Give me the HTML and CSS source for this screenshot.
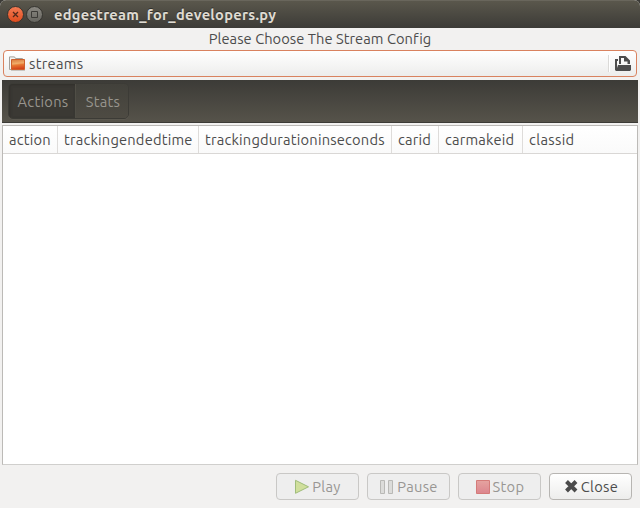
FILE: index.html
```html
<!DOCTYPE html>
<html lang="en">
<head>
<meta charset="utf-8">
<title>edgestream_for_developers.py</title>
<link rel="stylesheet" href="styles.css">
</head>
<body>
<div class="window">
  <header class="titlebar">
    <svg class="controls" width="40" height="18" viewBox="0 0 40 18">
      <defs>
        <linearGradient id="close" x2="0" y2="1"><stop stop-color="#f47c55"/><stop offset="1" stop-color="#df4b1c"/></linearGradient>
        <linearGradient id="max" x2="0" y2="1"><stop stop-color="#8b8982"/><stop offset="1" stop-color="#65645e"/></linearGradient>
      </defs>
      <circle cx="9.5" cy="8.5" r="8" fill="url(#close)" stroke="#35342f"/>
      <path d="M7 6l5 5M12 6l-5 5" stroke="#53291b" stroke-width="1.3"/>
      <circle cx="28.5" cy="8.5" r="8" fill="url(#max)" stroke="#35342f"/>
      <path d="M25.5 5.5h6v6h-6z" fill="none" stroke="#3c3b37"/>
    </svg>
    <h1 class="title">edgestream_for_developers.py</h1>
  </header>
  <div class="prompt"><span>Please Choose The Stream Config</span></div>
  <div class="chooser">
    <svg width="16" height="16" viewBox="0 0 16 16">
      <defs><linearGradient id="folder" x2=".15" y2="1"><stop stop-color="#d9773a"/><stop offset=".45" stop-color="#f0ad6a"/><stop offset=".6" stop-color="#e87832"/><stop offset="1" stop-color="#d3431a"/></linearGradient></defs>
      <path d="M.5 13.5V.9h5l1 1.6h7V5" fill="#f4f3f1" stroke="#a2a09b"/>
      <path d="M.5 13.5h2" stroke="#a2a09b"/>
      <path d="M2.500 3.500h13v10h-13z" fill="url(#folder)" stroke="#cd602c"/>
      <path d="M2 14.5h14" stroke="#c9c6c1"/>
    </svg>
    <span class="folder-name">streams</span>
    <span class="divider"></span>
    <svg class="open-icon" width="16" height="16" viewBox="0 0 16 16">
      <path d="M0 3h3v2H2v7H0z" fill="#4c4c4c"/>
      <path d="M4 8V0h6.5L15 4.500V8h-2.500V5.500H9V2H6v6z" fill="#4c4c4c"/>
      <path d="M3 9h13v5l-1 1H1l-1-1v-2h2z" fill="#4c4c4c"/>
    </svg>
  </div>
  <nav class="toolbar">
    <div class="switcher"><button class="tab selected">Actions</button><button class="tab">Stats</button></div>
  </nav>
  <main class="list">
    <div class="columns">
      <div>action</div><div>trackingendedtime</div><div>trackingdurationinseconds</div><div>carid</div><div>carmakeid</div><div class="classid">classid</div>
    </div>
  </main>
  <footer class="actions">
    <button class="button" disabled>
      <svg width="16" height="16" viewBox="0 0 16 16"><path d="M1.5 1.3v13L14.5 7.8z" fill="#d0df9c" stroke="#a0bd7b"/></svg><span>Play</span>
    </button>
    <button class="button" disabled>
      <svg width="16" height="16" viewBox="0 0 16 16"><path d="M1.5 1.5h4v13h-4zM9.5 1.5h4v13h-4z" fill="#dcdcda" stroke="#b9b9b6"/></svg><span>Pause</span>
    </button>
    <button class="button" disabled>
      <svg width="16" height="16" viewBox="0 0 16 16"><defs><linearGradient id="stop" x2="0" y2="1"><stop stop-color="#e5a3a0"/><stop offset="1" stop-color="#dc858d"/></linearGradient></defs><path d="M1.5 1.5h13v13h-13z" fill="url(#stop)" stroke="#d47b79"/></svg><span>Stop</span>
    </button>
    <button class="button close">
      <svg width="16" height="16" viewBox="0 0 16 16"><path d="M3.5 2.5l9.500 9.500M13 2.500l-9.500 9.500" stroke="#4b4b4b" stroke-width="4"/></svg><span>Close</span>
    </button>
  </footer>
</div>
</body>
</html>
```
FILE: styles.css
```css
* { box-sizing: border-box; }
body {
  margin: 0;
  background: #3c3b37;
  color: #4c4c4c;
  font: 14.667px/20px Ubuntu, "Noto Sans", sans-serif;
}
button { font: inherit; color: inherit; letter-spacing: inherit; padding: 0; margin: 0; }
svg { display: block; flex: none; }
.window {
  display: flex;
  flex-direction: column;
  height: 508px;
  background: #f2f1f0;
  border-radius: 6px 6px 0 0;
  overflow: hidden;
}
.titlebar {
  display: flex;
  align-items: center;
  gap: 8px;
  flex: 0 0 28px;
  padding: 1px 6px 0;
  background: linear-gradient(#5a574c, #3c3b37);
  border-top: 1px solid #69665c;
}
.title {
  margin: 0;
  color: #dfdbd2;
  font-size: 14.667px;
  font-weight: 700;
  line-height: 20px;
  letter-spacing: .27px;
  white-space: nowrap;
  text-shadow: 0 -1px #302f2b;
}
.prompt { flex: 0 0 22px; line-height: 22px; letter-spacing: .05px; text-align: center; white-space: nowrap; }
.chooser {
  display: flex;
  align-items: center;
  flex: 0 0 27px;
  margin: 0 3px;
  padding: 0 5px;
  border: 1px solid #d9825f;
  border-radius: 4px;
  background: linear-gradient(#fff, #ededec);
}
.folder-name { flex: 1; margin-left: 4px; letter-spacing: .3px; }
.divider { width: 2px; height: 17px; margin-right: 5px; background: #dbdad8; border-right: 1px solid #fff; }
.toolbar {
  flex: 0 0 43px;
  margin: 3px 2px 0;
  padding: 3px 6px 0;
  background: linear-gradient(#3c3b37, #56534a);
  border-bottom: 1px solid #3c3b37;
}
.switcher {
  display: flex;
  width: 121px;
  height: 36px;
  border: 1px solid #3c3b36;
  border-radius: 5px;
  box-shadow: 0 1px #5b584f;
  overflow: hidden;
}
.tab { flex: 0 0 52px; padding: 2px 0 0 2px; border: 0; background: linear-gradient(#42413b, #4e4b43); color: #98958e; letter-spacing: .3px; }
.tab.selected { flex-basis: 67px; background: #3b3934; border-right: 1px solid #504e46; box-shadow: inset 1px 1px 3px #302f2b; }
.list {
  flex: 1;
  margin: 2px 2px 0;
  background: #fff;
  border: 1px solid #bcbab7;
  border-bottom-color: #d0cfcd;
}
.columns {
  display: grid;
  grid-template-columns: 55px 141px 193px 47px 84px 1fr;
  height: 28px;
  line-height: 27px;
  letter-spacing: .2px;
  background: linear-gradient(#fff, #fafafa);
  border-bottom: 1px solid #d9d7d5;
}
.columns div { padding-left: 6px; border-right: 1px solid #dedcda; white-space: nowrap; }
.columns .classid { border: 0; letter-spacing: .35px; }
.actions { display: flex; justify-content: flex-end; gap: 8px; flex: 0 0 43px; padding: 8px 8px; }
.button {
  display: flex;
  justify-content: center;
  align-items: center;
  gap: 2px;
  width: 83px;
  height: 27px;
  border: 1px solid #c9c8c6;
  border-radius: 4px;
  background: #eee;
  color: #989693;
  letter-spacing: .3px;
}
.button.close { color: #4c4c4c; border-color: #b7b5b2; background: linear-gradient(#fff, #ededec); }
```
